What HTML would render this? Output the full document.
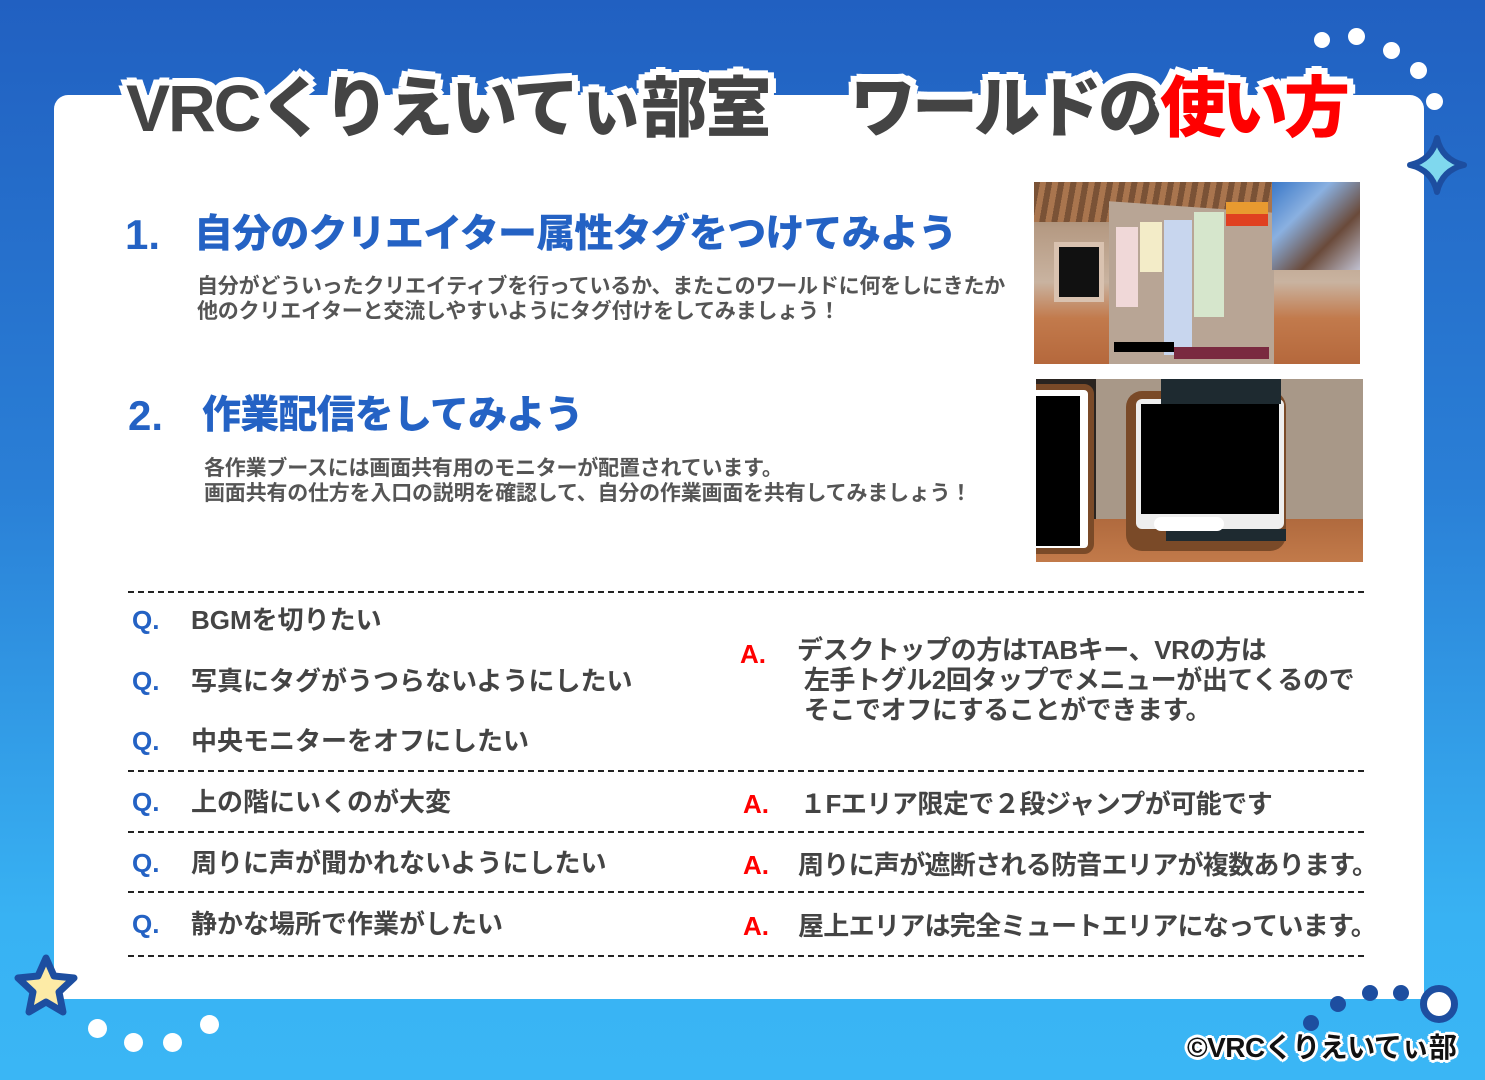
<!DOCTYPE html>
<html><head><meta charset="utf-8"><style>
*{margin:0;padding:0;box-sizing:border-box}
body{width:1485px;height:1080px;overflow:hidden;position:relative;background:linear-gradient(180deg,#2160c1 0%,#2a7fd6 45%,#38b2f3 85%,#3ab6f5 100%);font-family:"Liberation Sans","Noto Sans CJK JP",sans-serif;font-weight:bold}
.card{position:absolute;left:54px;top:95px;width:1370px;height:904px;background:#fff;border-radius:14px 14px 0 0}
.t{position:absolute;white-space:nowrap}
.title{font-family:"Liberation Sans","Noto Sans CJK JP",sans-serif;font-weight:900;color:#444;font-size:66px;top:68px;line-height:80px;
text-shadow:0 0 0 #fff,4px 0 #fff,-4px 0 #fff,0 4px #fff,0 -4px #fff,4px 4px #fff,-4px -4px #fff,4px -4px #fff,-4px 4px #fff,8px 0 #fff,-8px 0 #fff,0 8px #fff,0 -8px #fff,6px 6px #fff,-6px -6px #fff,6px -6px #fff,-6px 6px #fff}
.h{color:#2462c4;font-size:39px;font-weight:900;line-height:50px}
.p{color:#555;font-size:21px;line-height:25px}
.q,.Q,.A{line-height:36px;font-size:26px}
.q{color:#444}
.Q{color:#2462c4}
.A{color:#f00}
.dash{position:absolute;left:128px;width:1236px;border-top:2px dashed #222;height:0}
.dot{position:absolute;border-radius:50%}
</style></head><body>
<div class="card"></div>
<div class="t title" style="left:126px;letter-spacing:-2px">VRCくりえいてぃ部室</div>
<div class="t title" style="left:850px;letter-spacing:-4px">ワールドの<span style="color:#f00">使い方</span></div>

<div class="t h" style="left:125px;top:210px;font-size:42px">1.</div>
<div class="t h" style="left:194px;top:210px;letter-spacing:-0.8px">自分のクリエイター属性タグをつけてみよう</div>
<div class="t p" style="left:197px;top:274px;letter-spacing:-0.2px">自分がどういったクリエイティブを行っているか、またこのワールドに何をしにきたか<br>他のクリエイターと交流しやすいようにタグ付けをしてみましょう！</div>
<div class="t h" style="left:128px;top:391px;font-size:42px">2.</div>
<div class="t h" style="left:202px;top:391px;letter-spacing:-0.8px">作業配信をしてみよう</div>
<div class="t p" style="left:204px;top:456px;letter-spacing:-0.2px">各作業ブースには画面共有用のモニターが配置されています。<br>画面共有の仕方を入口の説明を確認して、自分の作業画面を共有してみましょう！</div>

<div class="t" style="left:1034px;top:182px;width:326px;height:182px;overflow:hidden;background:linear-gradient(180deg,#8a6a50 0%,#b59a83 25%,#c9b3a0 55%,#c27a4c 75%,#b5683c 100%)">
 <div style="position:absolute;left:0;top:0;width:326px;height:40px;background:repeating-linear-gradient(100deg,#7a5236 0 6px,#a9754e 6px 12px)"></div>
 <div style="position:absolute;left:20px;top:60px;width:50px;height:60px;background:#111;border:5px solid #d9c2b0"></div>
 <div style="position:absolute;left:75px;top:25px;width:165px;height:170px;background:#b8a595;transform:skewY(4deg)"></div>
 <div style="position:absolute;left:82px;top:45px;width:22px;height:80px;background:#f0d8d8"></div>
 <div style="position:absolute;left:106px;top:40px;width:22px;height:50px;background:#f3ecc8"></div>
 <div style="position:absolute;left:130px;top:38px;width:28px;height:135px;background:#c8d6ee"></div>
 <div style="position:absolute;left:160px;top:30px;width:30px;height:105px;background:#d6e6cc"></div>
 <div style="position:absolute;left:192px;top:20px;width:42px;height:12px;background:#e89a30"></div>
 <div style="position:absolute;left:192px;top:32px;width:42px;height:12px;background:#e04020"></div>
 <div style="position:absolute;left:238px;top:0;width:88px;height:88px;background:linear-gradient(135deg,#3a78c8,#8ab0e0,#6a4a3a,#c0c0d0)"></div>
 <div style="position:absolute;left:80px;top:160px;width:60px;height:10px;background:#000"></div>
 <div style="position:absolute;left:140px;top:165px;width:95px;height:12px;background:#7a2a40"></div>
</div>
<div class="t" style="left:1036px;top:379px;width:327px;height:183px;overflow:hidden;background:#a89888">
 <div style="position:absolute;left:0;top:0;width:60px;height:183px;background:#2a2420"></div>
 <div style="position:absolute;left:0;top:140px;width:327px;height:43px;background:linear-gradient(180deg,#b06a3e,#c27a4a)"></div>
 <div style="position:absolute;left:-10px;top:5px;width:68px;height:170px;background:#fff;border:6px solid #7a4a28;border-radius:10px"><div style="position:absolute;left:0;top:6px;width:48px;height:150px;background:#000"></div></div>
 <div style="position:absolute;left:90px;top:12px;width:160px;height:160px;background:#7a4a28;border-radius:16px"></div>
 <div style="position:absolute;left:100px;top:20px;width:148px;height:130px;background:#eee;border-radius:6px"><div style="position:absolute;left:5px;top:5px;width:138px;height:110px;background:#000"></div></div>
 <div style="position:absolute;left:125px;top:0;width:120px;height:25px;background:#1e2a30"></div>
 <div style="position:absolute;left:130px;top:150px;width:120px;height:12px;background:#1e2a30"></div>
 <div style="position:absolute;left:118px;top:138px;width:70px;height:14px;background:#fff;border-radius:7px"></div>
</div>

<div class="dash" style="top:591px"></div>
<div class="dash" style="top:770px"></div>
<div class="dash" style="top:831px"></div>
<div class="dash" style="top:891px"></div>
<div class="dash" style="top:955px"></div>

<div class="t Q" style="left:132px;top:602px">Q.</div><div class="t q" style="left:191px;top:602px">BGMを切りたい</div>
<div class="t Q" style="left:132px;top:663px">Q.</div><div class="t q" style="left:191px;top:663px">写真にタグがうつらないようにしたい</div>
<div class="t Q" style="left:132px;top:723px">Q.</div><div class="t q" style="left:191px;top:723px">中央モニターをオフにしたい</div>
<div class="t Q" style="left:132px;top:784px">Q.</div><div class="t q" style="left:191px;top:784px">上の階にいくのが大変</div>
<div class="t Q" style="left:132px;top:845px">Q.</div><div class="t q" style="left:191px;top:845px">周りに声が聞かれないようにしたい</div>
<div class="t Q" style="left:132px;top:906px">Q.</div><div class="t q" style="left:191px;top:906px">静かな場所で作業がしたい</div>

<div class="t A" style="left:740px;top:636px">A.</div>
<div class="t q" style="left:797px;top:635px;line-height:30px;letter-spacing:-0.4px">デスクトップの方はTABキー、VRの方は<br>&nbsp;左手トグル2回タップでメニューが出てくるので<br>&nbsp;そこでオフにすることができます。</div>
<div class="t A" style="left:743px;top:786px">A.</div><div class="t q" style="left:800px;top:786px;letter-spacing:-0.5px">１Fエリア限定で２段ジャンプが可能です</div>
<div class="t A" style="left:743px;top:847px">A.</div><div class="t q" style="left:798px;top:847px;letter-spacing:-0.7px">周りに声が遮断される防音エリアが複数あります。</div>
<div class="t A" style="left:743px;top:908px">A.</div><div class="t q" style="left:798px;top:908px;letter-spacing:-0.7px">屋上エリアは完全ミュートエリアになっています。</div>

<div class="dot" style="left:1314px;top:32px;width:16px;height:16px;background:#fff"></div>
<div class="dot" style="left:1348px;top:28px;width:17px;height:17px;background:#fff"></div>
<div class="dot" style="left:1383px;top:42px;width:17px;height:17px;background:#fff"></div>
<div class="dot" style="left:1410px;top:62px;width:17px;height:17px;background:#fff"></div>
<div class="dot" style="left:1426px;top:93px;width:17px;height:17px;background:#fff"></div>
<svg class="t" style="left:1404px;top:132px" width="66" height="66" viewBox="0 0 66 66"><path d="M33 6 Q38 28 60 33 Q38 38 33 60 Q28 38 6 33 Q28 28 33 6Z" fill="#7fd8ee" stroke="#1d4ea0" stroke-width="6" stroke-linejoin="round"/></svg>
<svg class="t" style="left:10px;top:950px" width="72" height="72" viewBox="0 0 72 72"><path d="M36 8 L44 26 L64 28 L49 42 L53 62 L36 52 L19 62 L23 42 L8 28 L28 26Z" fill="#fdeba6" stroke="#1d4ea0" stroke-width="7" stroke-linejoin="round"/></svg>
<div class="dot" style="left:88px;top:1019px;width:19px;height:19px;background:#fff"></div>
<div class="dot" style="left:124px;top:1033px;width:19px;height:19px;background:#fff"></div>
<div class="dot" style="left:163px;top:1033px;width:19px;height:19px;background:#fff"></div>
<div class="dot" style="left:200px;top:1015px;width:19px;height:19px;background:#fff"></div>
<div class="dot" style="left:1303px;top:1015px;width:16px;height:16px;background:#1d4ea0"></div>
<div class="dot" style="left:1330px;top:996px;width:16px;height:16px;background:#1d4ea0"></div>
<div class="dot" style="left:1362px;top:985px;width:16px;height:16px;background:#1d4ea0"></div>
<div class="dot" style="left:1393px;top:985px;width:16px;height:16px;background:#1d4ea0"></div>
<div class="dot" style="left:1420px;top:985px;width:38px;height:38px;border:7px solid #1d4ea0;background:#fff"></div>
<div class="t" style="left:1187px;top:1026px;font-size:28px;color:#111;letter-spacing:-0.5px;text-shadow:2px 0 #fff,-2px 0 #fff,0 2px #fff,0 -2px #fff,2px 2px #fff,-2px -2px #fff,2px -2px #fff,-2px 2px #fff,3px 0 #fff,-3px 0 #fff,0 3px #fff,0 -3px #fff">©VRCくりえいてぃ部</div>
</body></html>
